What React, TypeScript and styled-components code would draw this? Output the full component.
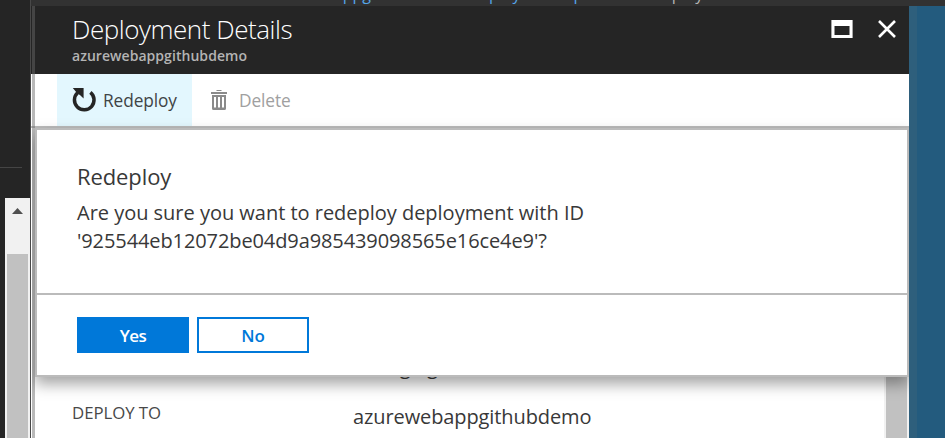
import React from "react";
import styled, { createGlobalStyle } from "styled-components";

const Global = createGlobalStyle`
  * { box-sizing: border-box; }
  body { margin: 0; background: #252525; font-family: "Open Sans", "Noto Sans", sans-serif; color: #383838; }
  h1, h2, p { margin: 0; font-weight: 400; }
`;

const Page = styled.div`
  display: flex;
  width: 945px;
  height: 438px;
  overflow: hidden;
  background: #252525;
`;

const Rail = styled.aside`
  width: 31px;
  display: flex;
  flex-direction: column;
  border-right: 1px solid #484848;
`;
const RailDivider = styled.div`
  width: 22px;
  height: 1px;
  margin: 167px 0 30px;
  background: #454545;
`;
const RailScrollbar = styled.div`
  flex: 1;
  margin-left: 5px;
  padding: 10px 2px 0;
  display: flex;
  flex-direction: column;
  gap: 40px;
  background: #f1f1f1;
  svg { display: block; margin-left: 5px; }
`;
const Thumb = styled.div`
  flex: 1;
  background: #c1c1c1;
`;

const Main = styled.main`
  flex: 1;
  min-width: 0;
  display: flex;
  flex-direction: column;
`;
const Breadcrumb = styled.nav`
  height: 6px;
  overflow: hidden;
  display: flex;
  padding-left: 230px;
  background: #323232;
`;
const Crumb = styled.span<{ $current?: boolean; $after?: number }>`
  font-size: 16px;
  line-height: 20px;
  margin-top: -16px;
  margin-right: ${p => p.$after ?? 0}px;
  white-space: nowrap;
  color: ${p => (p.$current ? "#b5b5b5" : "#55a5e8")};
`;
const Workspace = styled.div`
  flex: 1;
  min-height: 0;
  display: flex;
`;
const Backdrop = styled.div`
  flex: 1;
  background: #235b7e;
  border-left: 8px solid #2e5f7c;
`;

const Blade = styled.section`
  position: relative;
  width: 878px;
  display: flex;
  flex-direction: column;
  background: #fff;
`;
const BladeEdge = styled.div`
  position: absolute;
  left: 1px;
  top: 0;
  bottom: 0;
  width: 3px;
  background: rgba(107, 107, 107, 0.47);
`;
const Header = styled.header`
  height: 68px;
  display: flex;
  justify-content: space-between;
  padding: 6px 13px 0 41px;
  background: #252525;
`;
const Title = styled.h1`
  font-size: 26px;
  line-height: 34px;
  font-weight: 300;
  letter-spacing: -0.45px;
  color: #fff;
`;
const Subtitle = styled.p`
  font-size: 14px;
  line-height: 20px;
  font-weight: 600;
  letter-spacing: 0.05px;
  color: #b4b4b4;
`;
const WindowButtons = styled.div`
  display: flex;
  align-items: flex-start;
  gap: 25px;
  padding-top: 8px;
  svg { display: block; }
`;

const Toolbar = styled.div`
  height: 54px;
  display: flex;
  padding-left: 26px;
  border-bottom: 2px solid #bbb;
`;
const Command = styled.div<{ $active?: boolean; $disabled?: boolean }>`
  display: flex;
  align-items: center;
  gap: ${p => (p.$active ? 6 : 11)}px;
  width: ${p => (p.$active ? 135 : 130)}px;
  padding-left: ${p => (p.$active ? 15 : 19)}px;
  font-size: 17.3px;
  letter-spacing: -0.1px;
  background: ${p => (p.$active ? "#e3f7fe" : "transparent")};
  color: ${p => (p.$disabled ? "#a0a0a0" : "#3f4446")};
  svg { display: block; flex: none; }
`;

const Body = styled.div`
  flex: 1;
  display: flex;
  justify-content: space-between;
`;
const Details = styled.div`
  display: flex;
  flex-direction: column;
  gap: 22px;
  padding: 225px 0 0 41px;
`;
const DetailRow = styled.div`
  display: flex;
  height: 28px;
  line-height: 28px;
`;
const Label = styled.div`
  width: 281px;
  margin-top: -4px;
  font-size: 16.8px;
  letter-spacing: -0.05px;
  color: #484848;
`;
const Value = styled.div<{ $tight?: boolean }>`
  font-size: 20px;
  letter-spacing: ${p => (p.$tight ? -0.35 : -0.1)}px;
  white-space: nowrap;
`;
const BladeScrollbar = styled.div`
  width: 25px;
  display: flex;
  padding: 0 2px;
  background: #f1f1f1;
`;

const DialogLayer = styled.div`
  position: absolute;
  inset: 0 0 0 1px;
  overflow: hidden;
  padding: 122px 0 0 3px;
`;
const Dialog = styled.div`
  height: 249px;
  display: flex;
  flex-direction: column;
  background: #fff;
  border: 2px solid #bbb;
  box-shadow: 0 7px 14px rgba(0, 0, 0, 0.36);
`;
const Message = styled.div`
  height: 165px;
  padding: 32px 40px 0;
  border-bottom: 2px solid #bbb;
`;
const DialogTitle = styled.h2`
  font-size: 22px;
  line-height: 29px;
  letter-spacing: -0.1px;
  margin-bottom: 8px;
`;
const Question = styled.p`
  font-size: 20px;
  line-height: 28px;
  letter-spacing: -0.02px;
`;
const DeploymentId = styled.span`
  display: block;
  letter-spacing: -0.1px;
`;
const Actions = styled.div`
  display: flex;
  gap: 8px;
  padding: 22px 40px;
`;
const Button = styled.button<{ $primary?: boolean }>`
  width: 112px;
  height: 36px;
  padding: 0;
  border: 2px solid #0078d9;
  background: ${p => (p.$primary ? "#0078d9" : "#fff")};
  color: ${p => (p.$primary ? "#fff" : "#0078d9")};
  font: 600 17px/33px "Open Sans", sans-serif;
  letter-spacing: ${p => (p.$primary ? -0.6 : 0)}px;
`;

const RedeployIcon = () => (
  <svg width="25" height="26" viewBox="0 0 25 26">
    <path d="M18.400 5.400A9.800 9.800 0 1 1 5.600 5.800" fill="none" stroke="#252525" strokeWidth="3.500" />
    <path d="M.8 1H11.600V11.600L8.200 8.200 5.200 6.200Z" fill="#252525" />
  </svg>
);
const TrashIcon = () => (
  <svg width="17" height="22" viewBox="0 0 17 22" fill="#8a8a8a">
    <path d="M5.500 1h5v1h-5zM0 3h16v2H0z" />
    <path fillRule="evenodd" d="M1 6h14v13.500q0 1.500-1.500 1.500h-11Q1 21 1 19.500zM3 8v10.500h2V8zM7 8v10.500h2V8zM11 8v10.500h2V8z" />
  </svg>
);
const MaximizeIcon = () => (
  <svg width="22" height="18" viewBox="0 0 22 18">
    <path fill="#fff" fillRule="evenodd" d="M.4 0h21.200v18H.4zM3.500 6v9h15V6z" />
  </svg>
);
const CloseIcon = () => (
  <svg width="18" height="18" viewBox="0 0 18 18">
    <path d="M1 1l16 16M17 1L1 17" stroke="#fff" strokeWidth="2.600" />
  </svg>
);

export default function App() {
  return (
    <Page>
      <Global />
      <Rail>
        <RailDivider />
        <RailScrollbar>
          <svg width="11" height="6" viewBox="0 0 11 6"><path d="M5.500 0L11 6H0z" fill="#505050" /></svg>
          <Thumb />
        </RailScrollbar>
      </Rail>
      <Main>
        <Breadcrumb>
          <Crumb $after={15}>azurewebappgithubdemo</Crumb>
          <Crumb $after={31}>Deployment options</Crumb>
          <Crumb $current>Deployment details</Crumb>
        </Breadcrumb>
        <Workspace>
          <Blade>
            <Header>
              <div>
                <Title>Deployment Details</Title>
                <Subtitle>azurewebappgithubdemo</Subtitle>
              </div>
              <WindowButtons>
                <MaximizeIcon />
                <CloseIcon />
              </WindowButtons>
            </Header>
            <Toolbar>
              <Command $active><RedeployIcon />Redeploy</Command>
              <Command $disabled><TrashIcon />Delete</Command>
            </Toolbar>
            <Body>
              <Details>
                <DetailRow><Label /><Value $tight>Changing</Value></DetailRow>
                <DetailRow><Label>DEPLOY TO</Label><Value>azurewebappgithubdemo</Value></DetailRow>
              </Details>
              <BladeScrollbar><Thumb /></BladeScrollbar>
            </Body>
            <BladeEdge />
            <DialogLayer>
              <Dialog>
                <Message>
                  <DialogTitle>Redeploy</DialogTitle>
                  <Question>
                    Are you sure you want to redeploy deployment with ID
                    <DeploymentId>'925544eb12072be04d9a985439098565e16ce4e9'?</DeploymentId>
                  </Question>
                </Message>
                <Actions>
                  <Button $primary>Yes</Button>
                  <Button>No</Button>
                </Actions>
              </Dialog>
            </DialogLayer>
          </Blade>
          <Backdrop />
        </Workspace>
      </Main>
    </Page>
  );
}
